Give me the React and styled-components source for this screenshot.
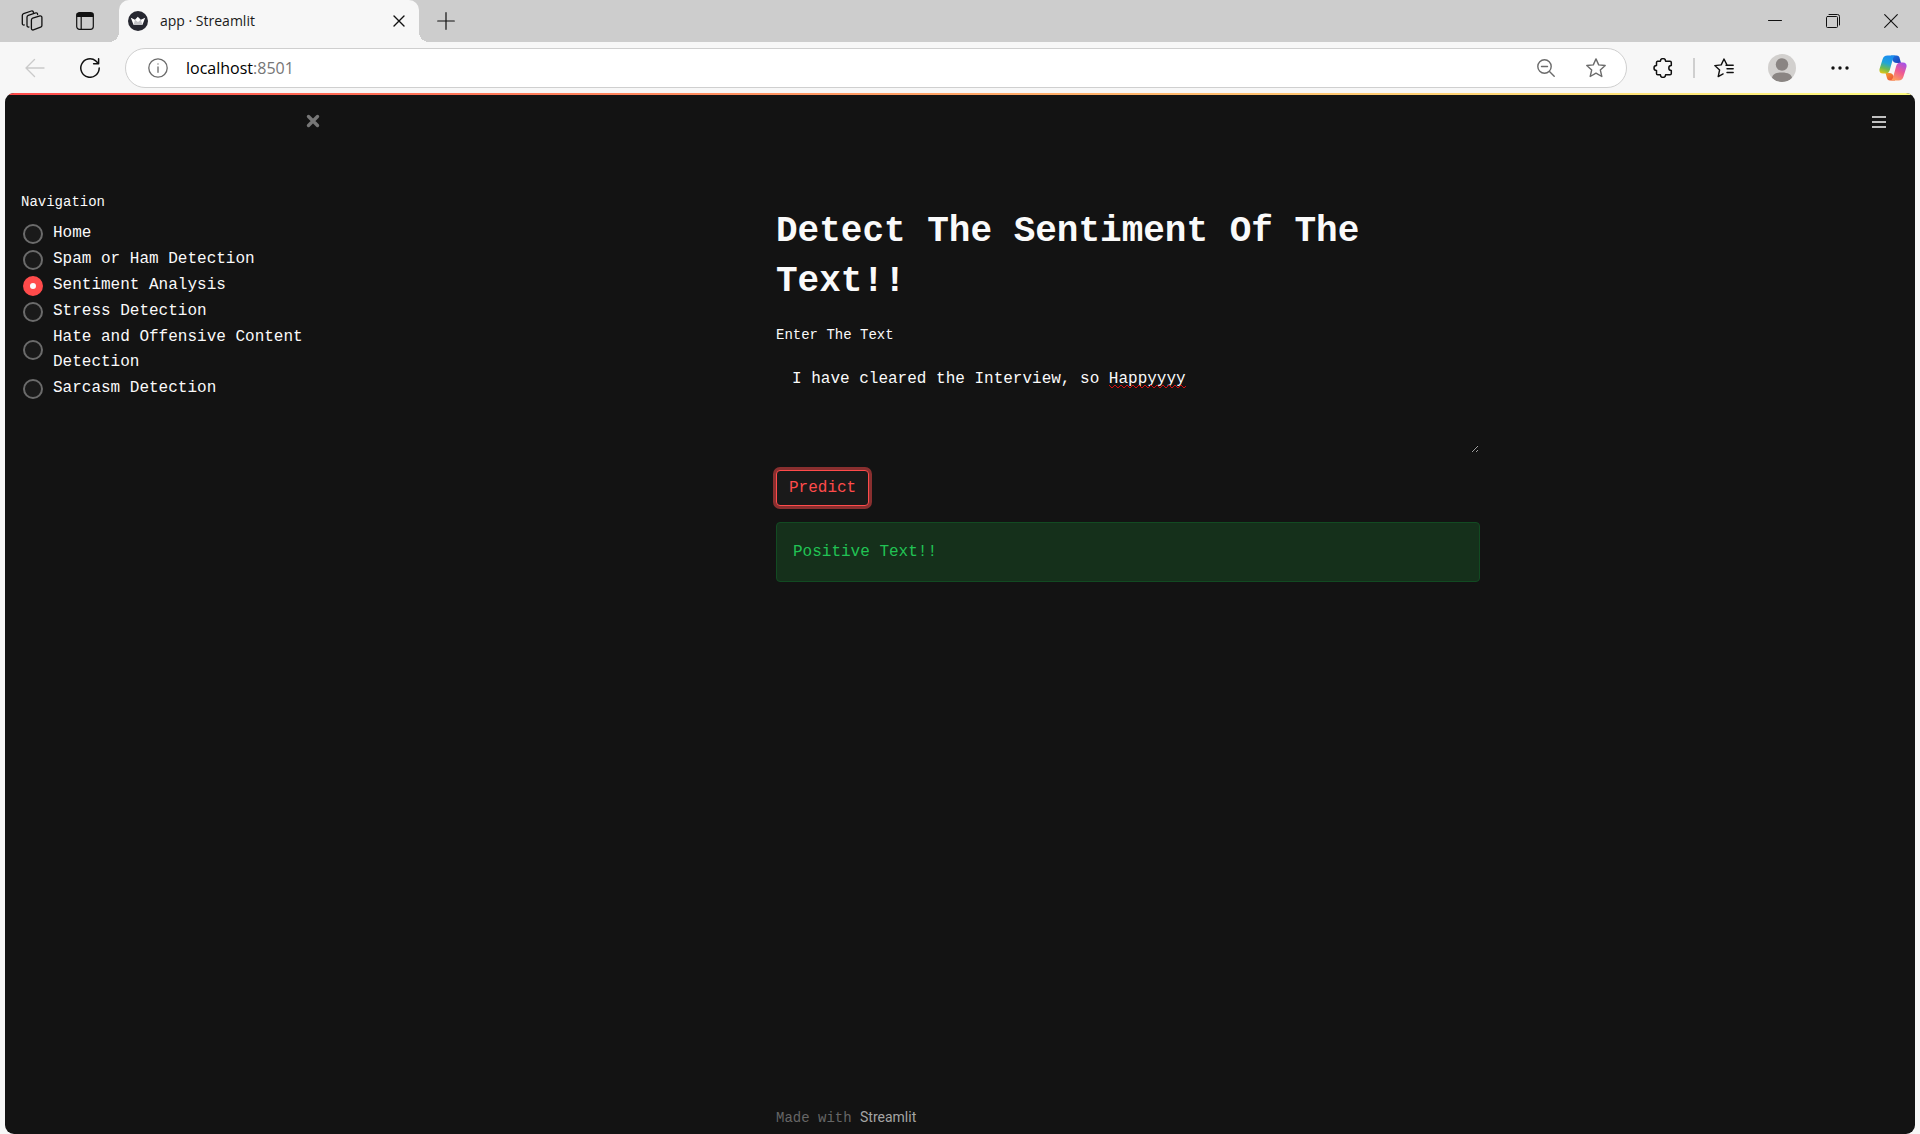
import React, { useState } from "react";
import styled, { createGlobalStyle } from "styled-components";

const MONO = '"Liberation Mono", monospace';
const UI = '"Open Sans", "Noto Sans", sans-serif';

const GlobalStyle = createGlobalStyle`
  *, *::before, *::after { box-sizing: border-box; }
  body { margin: 0; background: #f7f7f7; color: #fafafa; }
  svg { display: block; flex: none; }
`;

const Browser = styled.div`
  min-height: 100vh;
  display: flex;
  flex-direction: column;
  font-family: ${UI};
`;

const TabStrip = styled.header`
  display: flex;
  align-items: stretch;
  height: 42px;
  background: #cdcdcd;
  color: #111;
`;

const IconButton = styled.button`
  display: flex;
  align-items: center;
  justify-content: center;
  flex: none;
  width: ${(p) => p.$w || 32}px;
  height: ${(p) => p.$h || 32}px;
  padding: 0;
  border: 0;
  background: none;
  color: ${(p) => p.$color || "#111"};
`;

const CopilotButton = styled(IconButton)`
  margin-left: 21px;
`;

const StripTools = styled.div`
  display: flex;
  align-items: center;
  gap: 21px;
  width: 119px;
  padding-left: 16px;
`;

const Tab = styled.div`
  position: relative;
  display: flex;
  align-items: center;
  gap: 12px;
  width: 300px;
  padding: 0 4px 0 9px;
  border-radius: 10px 10px 0 0;
  background: #f7f7f7;

  &::before, &::after {
    content: "";
    position: absolute;
    bottom: 0;
    width: 10px;
    height: 10px;
  }
  &::before {
    right: 100%;
    background: radial-gradient(circle at 0 0, transparent 10px, #f7f7f7 10px);
  }
  &::after {
    left: 100%;
    background: radial-gradient(circle at 100% 0, transparent 10px, #f7f7f7 10px);
  }
`;

const TabTitle = styled.span`
  flex: 1;
  font-size: 14px;
  line-height: 20px;
  color: #1a1a1a;
`;

const NewTab = styled.div`
  display: flex;
  align-items: center;
  flex: 1;
  padding-left: 11px;
`;

const WindowControls = styled.div`
  display: flex;
  align-items: center;
`;

const Toolbar = styled.div`
  display: flex;
  align-items: center;
  height: 51px;
  padding: 0 11px 0 19px;
  background: #f7f7f7;
`;

const NavButtons = styled.div`
  display: flex;
  gap: 23px;
  margin-right: 19px;
`;

const AddressBar = styled.div`
  display: flex;
  align-items: center;
  flex: 1;
  height: 40px;
  padding: 0 14px 0 16px;
  border: 1px solid #cfcfcf;
  border-radius: 20px;
  background: #fff;
`;

const Address = styled.div`
  flex: 1;
  padding-left: 12px;
  font-size: 16px;
  line-height: 24px;
  color: #000;

  span { color: #767676; }
`;

const AddressActions = styled.div`
  display: flex;
  gap: 18px;
`;

const ToolbarActions = styled.div`
  display: flex;
  align-items: center;
  margin-left: 20px;
`;

const Divider = styled.span`
  width: 2px;
  height: 20px;
  margin: 0 13px 0 14px;
  background: #cfcfcf;
`;

const Page = styled.div`
  display: flex;
  flex-direction: column;
  flex: 1;
  margin: 0 5px;
  border-radius: 9px;
  overflow: hidden;
  background: #131313;
  font-family: ${MONO};
`;

const Decoration = styled.div`
  height: 2px;
  background: linear-gradient(90deg, #ff4b4b, #fffd80);
`;

const AppBody = styled.div`
  display: flex;
  flex: 1;
`;

const Sidebar = styled.aside`
  flex: none;
  width: 336px;
  padding: 10px 12px 0 16px;
`;

const SidebarTop = styled.div`
  display: flex;
  justify-content: flex-end;
  height: 85px;
`;

const NavGroup = styled.fieldset`
  display: grid;
  gap: 1px;
  margin: 0;
  padding: 0;
  border: 0;
  font-size: 16px;
  line-height: 25px;
`;

const NavLegend = styled.legend`
  padding: 0 0 7px;
  font-size: 14px;
  line-height: 24px;
`;

const Option = styled.label`
  display: flex;
  align-items: center;
  gap: 10px;
  padding: 0 16px 0 2px;
`;

const Radio = styled.input`
  appearance: none;
  flex: none;
  width: 20px;
  height: 20px;
  margin: 0;
  border: 2px solid #6b6b6b;
  border-radius: 50%;
  background: #1a1a1a;

  &:checked {
    border: 7px solid #ff4b4b;
    background: #fafafa;
  }
`;

const Main = styled.main`
  display: flex;
  flex-direction: column;
  flex: 1;
  min-width: 0;
`;

const MenuBar = styled.div`
  display: flex;
  justify-content: flex-end;
  padding: 11px 20px 0 0;
`;

const Column = styled.div`
  width: 100%;
  max-width: 736px;
  margin: 0 auto;
  padding: 0 16px;
`;

const Content = styled(Column)`
  display: flex;
  flex-direction: column;
  align-items: flex-start;
  flex: 1;
  gap: 16px;
  padding-top: 69px;
`;

const Title = styled.h1`
  margin: 0;
  font-size: 36px;
  font-weight: 700;
  line-height: 50px;
`;

const Field = styled.div`
  width: 100%;
  display: flex;
  flex-direction: column;
  gap: 7px;
`;

const FieldLabel = styled.label`
  font-size: 14px;
  line-height: 24px;
`;

const InputWrap = styled.div`
  position: relative;
  display: flex;
  font-size: 16px;
  line-height: 26px;
`;

const TextArea = styled.textarea`
  width: 100%;
  height: 100px;
  padding: 11px 15px;
  border: 1px solid transparent;
  outline: 0;
  resize: vertical;
  background: transparent;
  color: #fafafa;
  font: inherit;
  color-scheme: dark;
`;

const Squiggle = styled.svg`
  position: absolute;
  top: 30px;
  left: calc(16px + ${(p) => p.$start}ch);
  width: ${(p) => p.$length}ch;
  height: 5px;
  pointer-events: none;
`;

const PredictButton = styled.button`
  padding: 4px 12px;
  border: 1px solid #ff4b4b;
  border-radius: 4px;
  background: #1a1a1a;
  color: #ff4b4b;
  font-family: inherit;
  font-size: 16px;
  line-height: 26px;
  box-shadow: 0 0 0 3px rgba(255, 75, 75, 0.5);
`;

const Success = styled.div`
  width: 100%;
  padding: 16px;
  border: 1px solid #124a22;
  border-radius: 4px;
  background: #15301b;
  color: #21c354;
  font-size: 16px;
  line-height: 26px;
`;

const Footer = styled.footer`
  padding-bottom: 5px;
  font-size: 14px;
  line-height: 22px;
  color: #666;
`;

const FooterLink = styled.a`
  font-family: Roboto, "Open Sans", sans-serif;
  color: #a5a5a5;
  text-decoration: none;
`;

const Icon = ({ size = 20, box, children, sw = 1.4 }) => (
  <svg
    width={size}
    height={size}
    viewBox={box || "0 0 20 20"}
    fill="none"
    stroke="currentColor"
    strokeWidth={sw}
    strokeLinecap="round"
    strokeLinejoin="round"
    aria-hidden="true"
  >
    {children}
  </svg>
);

const WorkspacesIcon = () => (
  <Icon size={22} box="0 0 22 22" sw={1.3}>
    <path d="M11.700 8.100 19 5.900a1.500 1.500 0 0 1 1.900 1.500v8a2 2 0 0 1-1.300 1.800l-7.200 2.700a1.500 1.500 0 0 1-2-1.400v-8.600a2 2 0 0 1 1.300-1.800z" />
    <path d="M16.600 4.500v-.2a1.500 1.500 0 0 0-2-1.400L7.300 5.300A2 2 0 0 0 6 7.200v8.300a1.500 1.500 0 0 0 1.900 1.500" />
    <path d="M12.400 2.500v-.200a1.500 1.500 0 0 0-2-1.300L2.600 3.700A2 2 0 0 0 1.300 5.600v7.900a1.500 1.500 0 0 0 2 1.500" />
  </Icon>
);

const TabActionsIcon = () => (
  <Icon size={18} box="0 0 18 18" sw={1.2}>
    <rect x=".7" y=".7" width="16.600" height="16.600" rx="2.800" />
    <path d="M1.200 1.500h15.600v3H1.200z" fill="currentColor" />
    <path d="M5.200 5v12" />
  </Icon>
);

const CrownIcon = () => (
  <svg width="20" height="20" viewBox="0 0 20 20" aria-hidden="true">
    <circle cx="10" cy="10" r="10" fill="#262730" />
    <path d="M2.800 6.800 7 8.800 9.800 5.800l3 3L17.200 6.800l-2.700 7H5.500z" fill="#fff" />
    <path d="M7 8.800 10 11l2.800-2.200 1.700 5H5.500z" fill="#c4c4c8" />
  </svg>
);

const CopilotIcon = () => (
  <svg width="28" height="26" viewBox="0 0 28 26" aria-hidden="true">
    <defs>
      <linearGradient id="cpA" x1=".3" y1="0" x2="0" y2="1">
        <stop offset="0" stopColor="#1b8fee" />
        <stop offset=".35" stopColor="#1fa5d8" />
        <stop offset=".65" stopColor="#6cba52" />
        <stop offset="1" stopColor="#fcc90a" />
      </linearGradient>
      <linearGradient id="cpB" x1=".8" y1="0" x2=".3" y2="1">
        <stop offset="0" stopColor="#a352ea" />
        <stop offset=".5" stopColor="#ef5a92" />
        <stop offset="1" stopColor="#ffa05a" />
      </linearGradient>
      <linearGradient id="cpC" x1="0" y1="0" x2="1" y2="1">
        <stop offset="0" stopColor="#1c77e0" />
        <stop offset="1" stopColor="#1b3fb8" />
      </linearGradient>
      <linearGradient id="cpD" x1="0" y1="0" x2="1" y2="1">
        <stop offset="0" stopColor="#f7a02a" />
        <stop offset="1" stopColor="#e8443c" />
      </linearGradient>
    </defs>
    <path d="M12 .5h5.500c2 0 2.700 1.200 3.300 3.200L22 8h-4c-3 0-4-1.500-5-4z" fill="url(#cpC)" />
    <path d="M16 25.500h-5c-2 0-2.700-1.200-3.200-3L6.500 18H10c3 0 4 1.500 5 4z" fill="url(#cpD)" />
    <path d="M8.500.500h8.200c-1.700.5-2.400 2-3 4L10.800 15c-.7 2.400-2 3.600-4.300 3.600H4C1 18.600-.1 16.500.6 13.700L3.500 4.500C4.200 2 5.800.500 8.500.500z" fill="url(#cpA)" />
    <path d="M19.500 25.500h-8.200c1.700-.5 2.400-2 3-4L17.200 11c.7-2.400 2-3.600 4.300-3.600H24c3 0 4.100 2.100 3.400 4.900l-2.900 9.200c-.7 2.500-2.300 4-5 4z" fill="url(#cpB)" />
  </svg>
);

const Avatar = () => (
  <svg width="28" height="28" viewBox="0 0 28 28" aria-hidden="true">
    <defs>
      <clipPath id="avatarClip"><circle cx="14" cy="14" r="14" /></clipPath>
    </defs>
    <circle cx="14" cy="14" r="14" fill="#d2d0ce" />
    <g clipPath="url(#avatarClip)" fill="#8a8583">
      <circle cx="14" cy="10.500" r="6.200" />
      <path d="M4 24.500c0-4 4-6 10-6s10 2 10 6C21.500 27 18 28 14 28s-7.500-1-10-3.500z" />
    </g>
  </svg>
);

const STAR = "M10 .9l2.700 6 6.500.6-4.900 4.400 1.500 6.600-5.800-3.300-5.800 3.300 1.500-6.600L.8 7.500l6.500-.6z";

const PAGES = [
  "Home",
  "Spam or Ham Detection",
  "Sentiment Analysis",
  "Stress Detection",
  "Hate and Offensive Content Detection",
  "Sarcasm Detection",
];

const WAVE = Array.from({ length: 40 }, (_, i) => `${i * 3},${i % 2 ? 4 : 1}`).join(" ");

export default function App() {
  const [page, setPage] = useState("Sentiment Analysis");
  const [text, setText] = useState("I have cleared the Interview, so Happyyyy");
  const typo = text.indexOf("Happyyyy");

  return (
    <Browser>
      <GlobalStyle />
      <TabStrip>
        <StripTools>
          <IconButton aria-label="Workspaces"><WorkspacesIcon /></IconButton>
          <IconButton aria-label="Tab actions"><TabActionsIcon /></IconButton>
        </StripTools>
        <Tab>
          <CrownIcon />
          <TabTitle>app · Streamlit</TabTitle>
          <IconButton aria-label="Close tab">
            <Icon size={12} box="0 0 12 12"><path d="M1 1l10 10M11 1 1 11" /></Icon>
          </IconButton>
        </Tab>
        <NewTab>
          <IconButton aria-label="New tab">
            <Icon size={18} box="0 0 18 18" sw={1.2}><path d="M9 .7v16.600M.7 9h16.600" /></Icon>
          </IconButton>
        </NewTab>
        <WindowControls>
          <IconButton $w={58} $h={42} aria-label="Minimize">
            <Icon size={14} box="0 0 14 14" sw={1}><path d="M.5 6.500h13" /></Icon>
          </IconButton>
          <IconButton $w={58} $h={42} aria-label="Restore">
            <Icon size={14} box="0 0 14 14" sw={1}>
              <rect x=".5" y="2.500" width="11" height="11" rx="1" />
              <path d="M3 .5h8.500a2 2 0 0 1 2 2V11" />
            </Icon>
          </IconButton>
          <IconButton $w={58} $h={42} aria-label="Close">
            <Icon size={14} box="0 0 14 14" sw={1.1}><path d="M.7.700l12.600 12.600M13.300.7.7 13.300" /></Icon>
          </IconButton>
        </WindowControls>
      </TabStrip>

      <Toolbar>
        <NavButtons>
          <IconButton $color="#cacaca" aria-label="Back">
            <Icon><path d="M19 10H1M9.500 1.500 1 10l8.500 8.500" /></Icon>
          </IconButton>
          <IconButton aria-label="Refresh">
            <Icon sw={1.5}><path d="M19.200 10A9.200 9.200 0 1 1 15.800 2.900L18.400 5.600M18.600.800v5h-5" /></Icon>
          </IconButton>
        </NavButtons>
        <AddressBar>
          <IconButton $color="#6b6b6b" aria-label="Site information">
            <Icon sw={1.3}>
              <circle cx="10" cy="10" r="9.200" />
              <path d="M10 9v5.300M10 6v.1" />
            </Icon>
          </IconButton>
          <Address>localhost<span>:8501</span></Address>
          <AddressActions>
            <IconButton $color="#6b6b6b" aria-label="Zoom">
              <Icon size={18} box="0 0 18 18"><circle cx="7.500" cy="7.500" r="6.700" /><path d="M4.500 7.500h6M12.500 12.500l4.700 4.700" /></Icon>
            </IconButton>
            <IconButton $color="#6b6b6b" aria-label="Add to favorites">
              <Icon><path d={STAR} /></Icon>
            </IconButton>
          </AddressActions>
        </AddressBar>
        <ToolbarActions>
          <IconButton aria-label="Extensions">
            <Icon sw={1.5}>
              <path d="M4.500 3.200h2.900a2.600 2.600 0 0 1 5.200 0h4.400a1.300 1.300 0 0 1 1.300 1.300v3a2.500 2.500 0 0 0 0 5v3a1.300 1.300 0 0 1-1.300 1.300h-4.400a2.600 2.600 0 0 1-5.200 0H4.800a1.300 1.300 0 0 1-1.300-1.300v-3a2.500 2.500 0 0 1 0-5v-3A1.300 1.300 0 0 1 4.500 3.200z" />
            </Icon>
          </IconButton>
          <Divider />
          <IconButton aria-label="Favorites">
            <Icon sw={1.4}>
              <path d="M12.800 6.600 10 1 7.200 6.900.8 7.600l4.800 4.400-1.400 6.600 4.900-2.700" />
              <path d="M12 7.200h7.200M13 10.800h6.200M13 14.500h6.200" />
            </Icon>
          </IconButton>
          <IconButton $w={84} aria-label="Profile"><Avatar /></IconButton>
          <IconButton aria-label="More">
            <Icon size={18} box="0 0 18 18">
              <g fill="currentColor" stroke="none"><circle cx="2" cy="9" r="1.700" /><circle cx="9" cy="9" r="1.700" /><circle cx="16" cy="9" r="1.700" /></g>
            </Icon>
          </IconButton>
          <CopilotButton aria-label="Copilot"><CopilotIcon /></CopilotButton>
        </ToolbarActions>
      </Toolbar>

      <Page>
        <Decoration />
        <AppBody>
          <Sidebar>
            <SidebarTop>
              <IconButton $color="#777" aria-label="Close sidebar">
                <Icon size={14} box="0 0 14 14" sw={3.4}><path d="M2.500 2.500l9 9M11.500 2.500l-9 9" /></Icon>
              </IconButton>
            </SidebarTop>
            <NavGroup>
              <NavLegend>Navigation</NavLegend>
              {PAGES.map((name) => (
                <Option key={name}>
                  <Radio type="radio" name="page" checked={page === name} onChange={() => setPage(name)} />
                  {name}
                </Option>
              ))}
            </NavGroup>
          </Sidebar>
          <Main>
            <MenuBar>
              <IconButton $color="#fafafa" aria-label="Main menu">
                <Icon size={14} box="0 0 14 14" sw={1.6}><path d="M0 2h14M0 7h14M0 12h14" strokeLinecap="butt" /></Icon>
              </IconButton>
            </MenuBar>
            <Content>
              <Title>Detect The Sentiment Of The Text!!</Title>
              <Field>
                <FieldLabel htmlFor="message">Enter The Text</FieldLabel>
                <InputWrap>
                  <TextArea id="message" value={text} onChange={(e) => setText(e.target.value)} />
                  {typo >= 0 && (
                    <Squiggle $start={typo} $length={8} aria-hidden="true">
                      <polyline points={WAVE} fill="none" stroke="#d01010" strokeWidth="1" />
                    </Squiggle>
                  )}
                </InputWrap>
              </Field>
              <PredictButton>Predict</PredictButton>
              <Success role="status">Positive Text!!</Success>
            </Content>
            <Column>
              <Footer>
                Made with <FooterLink href="#streamlit">Streamlit</FooterLink>
              </Footer>
            </Column>
          </Main>
        </AppBody>
      </Page>
    </Browser>
  );
}
